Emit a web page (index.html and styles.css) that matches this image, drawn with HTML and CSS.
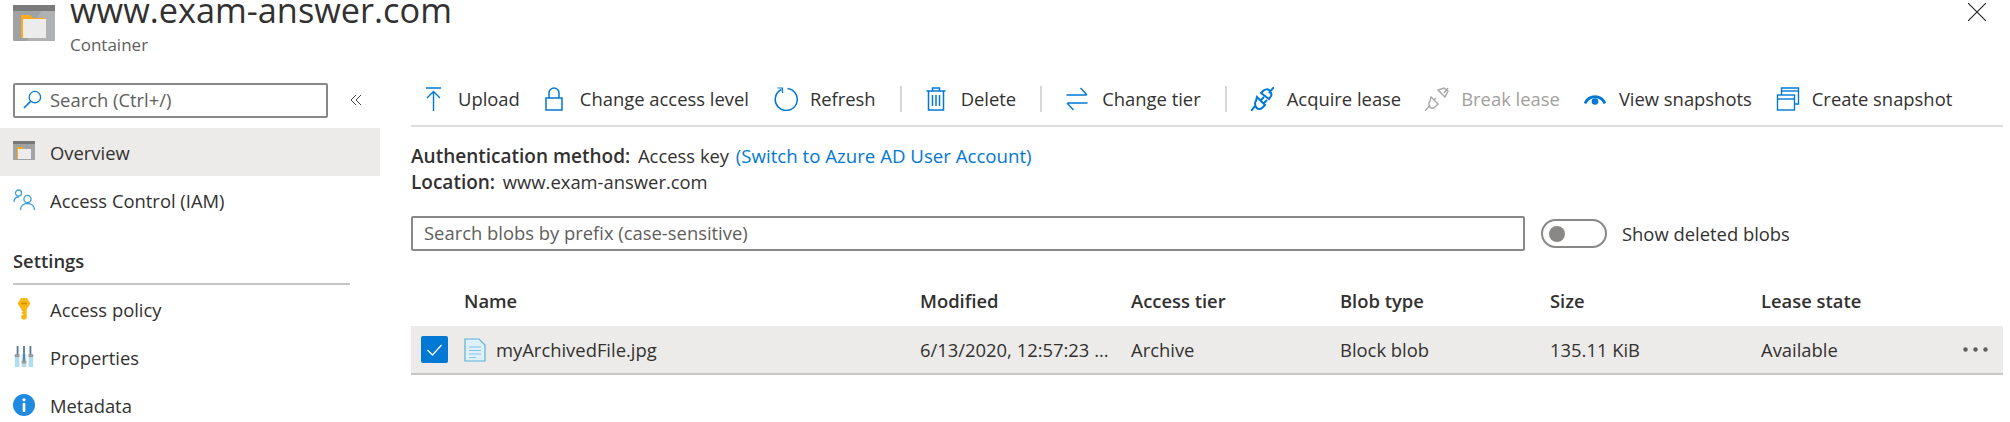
FILE: index.html
```html
<!DOCTYPE html>
<html lang="en">
<head>
    <meta charset="UTF-8">
    <title>www.exam-answer.com</title>
    <link rel="stylesheet" href="styles.css">
</head>
<body>

<header class="header">
    <svg class="header-icon" viewBox="0 0 42 36">
        <rect width="42" height="36" rx="1" fill="#a0a1a2"/>
        <path d="M28 6h14v30H14z" fill="#b0b1b2"/>
        <rect width="42" height="6" fill="#7a7a7a"/>
        <path d="M8 10h9l3 3h13v20H8z" fill="#ffa91f"/>
        <rect x="10" y="14" width="23" height="19" fill="#ececec"/>
    </svg>
    <div>
        <h1 class="title">www.exam-answer.com</h1>
        <div class="subtitle">Container</div>
    </div>
    <svg class="close" viewBox="0 0 16 16"><path d="M0 0l16 16M16 0L0 16" stroke="#222" stroke-width="1"/></svg>
</header>

<div class="page">
    <nav class="side">
        <div class="side-search-row">
            <div class="side-search">
                <svg class="icon-sm" viewBox="0 0 20 20"><circle cx="12.500" cy="7.500" r="6" fill="none" stroke="#0078d4" stroke-width="1.300"/><path d="M8 12l-7 7" stroke="#0078d4" stroke-width="1.600"/></svg>
                <span>Search (Ctrl+/)</span>
            </div>
            <svg class="collapse" viewBox="0 0 12 12"><path d="M6 1L1 6l5 5M11 1L6 6l5 5" fill="none" stroke="#444" stroke-width="1"/></svg>
        </div>
        <a class="side-item active">
            <svg class="side-icon" viewBox="0 0 22 22"><rect y="0" width="22" height="19" fill="#a0a1a2"/><rect width="22" height="3" fill="#777"/><path d="M4 6h5l2 2h7v10H4z" fill="#ffa91f"/><rect x="5" y="8" width="13" height="10" fill="#ececec"/></svg>
            Overview
        </a>
        <a class="side-item">
            <svg class="side-icon" viewBox="0 0 22 22"><g fill="none" stroke="#3b9dd6" stroke-width="1.300"><circle cx="5.500" cy="4" r="3"/><path d="M1 13c0-3 2-5 5-5"/><circle cx="14.500" cy="10" r="3.600"/><path d="M7.500 21c0-4 3-6.500 7-6.500s7 2.500 7 6.500"/></g></svg>
            Access Control (IAM)
        </a>
        <div class="side-group">Settings</div>
        <a class="side-item">
            <svg class="side-icon" viewBox="0 0 22 24"><path d="M8 0h6l4 6-4 6v10l-3 2-3-2v-3l2-1-2-2 2-1-2-2v-1L4 6z" fill="#fcb714"/><rect x="8" y="5" width="6" height="2" fill="#d98c00"/></svg>
            Access policy
        </a>
        <a class="side-item">
            <svg class="side-icon" viewBox="0 0 22 24"><g fill="#b3dcef"><rect x="1" y="9" width="5" height="14"/><rect x="8.500" y="9" width="5" height="14"/><rect x="16" y="9" width="5" height="14"/></g><g fill="#5a7d93"><rect x="3" y="0" width="2" height="12"/><rect x="10" y="0" width="2" height="17"/><rect x="17" y="0" width="2" height="12"/></g><g fill="#999"><rect x="1" y="9" width="5" height="3"/><rect x="8.500" y="16" width="5" height="3"/><rect x="16" y="9" width="5" height="3"/></g></svg>
            Properties
        </a>
        <a class="side-item">
            <svg class="side-icon" viewBox="0 0 22 22"><circle cx="11" cy="11" r="11" fill="#1f8ae0"/><rect x="9.700" y="9" width="2.600" height="9" fill="#fff"/><circle cx="11" cy="5.800" r="1.600" fill="#fff"/></svg>
            Metadata
        </a>
    </nav>

    <main class="main">
        <div class="toolbar">
            <span class="tool">
                <svg class="t-icon i-upload" viewBox="0 0 15 24"><path d="M0 1h15M7.500 24V5M1 11l6.500-6.500L14 11" fill="none" stroke="#0078d4" stroke-width="1.400"/></svg>
                Upload
            </span>
            <span class="tool">
                <svg class="t-icon i-lock" viewBox="0 0 18 24"><path d="M1 11h16v12H1zM4 11V6a5 5 0 0 1 10 0v5" fill="none" stroke="#0078d4" stroke-width="1.500"/></svg>
                Change access level
            </span>
            <span class="tool">
                <svg class="t-icon i-refresh" viewBox="0 0 24 24"><path d="M8 2.500a11 11 0 1 0 6-1" fill="none" stroke="#0078d4" stroke-width="1.500"/><path d="M4 1h5v5" fill="none" stroke="#0078d4" stroke-width="1.200"/></svg>
                Refresh
            </span>
            <span class="sep"></span>
            <span class="tool">
                <svg class="t-icon i-trash" viewBox="0 0 19 24"><path d="M0 4h19M6 4V1h7v3M2 4v19h15V4M6 8v11M9.500 8v11M13 8v11" fill="none" stroke="#0078d4" stroke-width="1.500"/></svg>
                Delete
            </span>
            <span class="sep"></span>
            <span class="tool">
                <svg class="t-icon i-tier" viewBox="0 0 21 24"><path d="M0 8h20M14 1l6.500 7M21 16H1M7 23l-6.500-7" fill="none" stroke="#0078d4" stroke-width="1.400"/></svg>
                Change tier
            </span>
            <span class="sep"></span>
            <span class="tool">
                <svg class="t-icon i-acquire" viewBox="0 0 23 24"><g fill="none" stroke="#0078d4" stroke-width="2"><path d="M0 24l5-6M18 6l5-6M6 10l8 8-3 3c-2 2-5 1-6-1s-2-4 0-6zM10 6l2-2c2-2 5-2 6-1s3 4 2 6l-2 3zM10 13l3-3M13 16l3-3"/></g></svg>
                Acquire lease
            </span>
            <span class="tool tool-off">
                <svg class="t-icon i-break" viewBox="0 0 24 24"><g fill="none" stroke="#a6a6a6" stroke-width="1.400"><path d="M0 24l5-6M19 6l4-5M6 10l7 7-3 3c-2 2-4 1-5 0s-2-4 0-6zM13 3l7 7 3-6-4-3zM9 13l2-2"/></g></svg>
                Break lease
            </span>
            <span class="tool">
                <svg class="t-icon i-eye" viewBox="0 0 22 14"><path d="M1 11.500C5 2.500 17 2.500 21 11.500" fill="none" stroke="#0078d4" stroke-width="2.800"/><circle cx="11" cy="9.500" r="3.300" fill="#0078d4"/></svg>
                View snapshots
            </span>
            <span class="tool">
                <svg class="t-icon i-create" viewBox="0 0 23 24"><g fill="none" stroke="#0078d4" stroke-width="1.400"><path d="M5 8V1h17v16h-4"/><path d="M5 4h17"/><rect x="1" y="8" width="17" height="15"/><path d="M1 12h17"/></g></svg>
                Create snapshot
            </span>
        </div>

        <div class="info">
            <div><b>Authentication method:</b> Access key <a class="link">(Switch to Azure AD User Account)</a></div>
            <div><b>Location:</b> www.exam-answer.com</div>
        </div>

        <div class="filter">
            <div class="filter-input">Search blobs by prefix (case-sensitive)</div>
            <span class="toggle"><i></i></span>
            <span>Show deleted blobs</span>
        </div>

        <div class="grid grid-head">
            <span></span>
            <span>Name</span>
            <span>Modified</span>
            <span>Access tier</span>
            <span>Blob type</span>
            <span>Size</span>
            <span>Lease state</span>
            <span></span>
        </div>
        <div class="grid grid-row">
            <span class="check">
                <svg viewBox="0 0 27 27"><path d="M6.500 14l5 5 9-10" fill="none" stroke="#fff" stroke-width="1.300"/></svg>
            </span>
            <span class="file">
                <svg class="file-icon" viewBox="0 0 22 24"><path d="M1 1h14l6 6v16H1z" fill="#dff0f9" stroke="#59b4d9" stroke-width="1.200"/><path d="M5 9h12M5 12.500h12M5 16h12M5 19.500h7" stroke="#7fc6e6" stroke-width="1.200"/></svg>
                myArchivedFile.jpg
            </span>
            <span>6/13/2020, 12:57:23 ...</span>
            <span>Archive</span>
            <span>Block blob</span>
            <span>135.11 KiB</span>
            <span>Available</span>
            <svg class="more" viewBox="0 0 25 5"><circle cx="2.500" cy="2.500" r="2.200" fill="#605e5c"/><circle cx="12.500" cy="2.500" r="2.200" fill="#605e5c"/><circle cx="22.500" cy="2.500" r="2.200" fill="#605e5c"/></svg>
        </div>
    </main>
</div>

</body>
</html>
```

FILE: styles.css
```css
* {
    box-sizing: border-box;
}
html, body {
    height: 422px;
    overflow: hidden;
}
body {
    margin: 0;
    background: #fff;
    color: #323130;
    font-family: "Open Sans", "Noto Sans", sans-serif;
    font-size: 18.4px;
}
svg {
    display: block;
    flex: none;
}
b {
    font-weight: 600;
    font-size: 19px;
    margin-right: 3px;
}

.header {
    display: flex;
    height: 70px;
    margin-top: -13px;
    padding-left: 13px;
    gap: 15px;
}
.header-icon {
    width: 42px;
    height: 36px;
    margin-top: 18px;
}
.title {
    margin: 0;
    font-size: 34.3px;
    line-height: 46px;
    font-weight: 400;
}
.subtitle {
    font-size: 17px;
    line-height: 24px;
    color: #605e5c;
}
.close {
    width: 18px;
    height: 18px;
    margin: 16px 24px 0 auto;
}

.page {
    display: flex;
    padding-top: 26px;
}
.side {
    width: 380px;
    flex: none;
}
.side-search-row {
    display: flex;
    align-items: center;
    padding-left: 13px;
    gap: 22px;
    height: 34px;
    margin-bottom: 11px;
}
.side-search {
    width: 315px;
    height: 35px;
    display: flex;
    align-items: center;
    gap: 8px;
    padding: 0 0 2px 8px;
    border: 2px solid #8a8886;
    border-radius: 2px;
    color: #605e5c;
}
.icon-sm {
    width: 19px;
    height: 19px;
}
.collapse {
    width: 12px;
    height: 12px;
}
.side-item {
    display: flex;
    align-items: center;
    height: 48px;
    padding-left: 13px;
    gap: 15px;
}
.side-item.active {
    background: #edebe9;
}
.side-icon {
    width: 22px;
    height: 22px;
}
.side-group {
    margin: 19px 30px 0 13px;
    height: 42px;
    line-height: 35px;
    border-bottom: 2px solid #c8c6c4;
    font-weight: 600;
}

.main {
    width: 1592px;
    margin-left: 31px;
    margin-top: -5px;
    flex: none;
}
.toolbar {
    display: flex;
    align-items: center;
    height: 49px;
    padding: 0 0 6px 15px;
    border-bottom: 2px solid #e1dfdd;
    gap: 24px;
}
.tool {
    display: flex;
    align-items: center;
    white-space: nowrap;
}
.tool-off {
    color: #a19f9d;
}
.t-icon {
    height: 24px;
}
.i-upload { width: 15px; margin-right: 17px; }
.i-lock { width: 18px; margin-left: 1px; margin-right: 17px; }
.i-refresh { width: 25px; margin-right: 12px; }
.i-trash { width: 20px; margin-right: 15px; }
.i-tier { width: 22px; margin-right: 14px; }
.i-acquire { width: 23px; margin-right: 13px; }
.i-break { width: 24px; margin-right: 12px; }
.i-eye { width: 22px; margin-right: 13px; }
.i-create { width: 24px; margin-right: 12px; }
.sep {
    width: 2px;
    height: 26px;
    background: #d6d6d6;
}

.info {
    padding-top: 16px;
    line-height: 26px;
}
.link {
    color: #0078d4;
    font-size: 18.65px;
    margin-left: 2px;
}

.filter {
    display: flex;
    align-items: center;
    margin-top: 21px;
    height: 35px;
}
.filter-input {
    width: 1114px;
    height: 35px;
    line-height: 29px;
    padding-left: 11px;
    border: 2px solid #8a8886;
    border-radius: 2px;
    color: #605e5c;
}
.toggle {
    display: flex;
    align-items: center;
    width: 66px;
    height: 29px;
    margin: 0 15px 0 16px;
    padding-left: 6px;
    border: 2px solid #8a8886;
    border-radius: 15px;
}
.toggle i {
    width: 16px;
    height: 16px;
    border-radius: 50%;
    background: #8a8886;
}

.grid {
    display: grid;
    grid-template-columns: 53px 456px 211px 209px 210px 211px 202px 40px;
    align-items: center;
}
.grid-head {
    margin-top: 26px;
    height: 49px;
    padding-bottom: 2px;
    font-weight: 600;
}
.grid-row {
    background: #edebe9;
    border-bottom: 2px solid #c8c6c4;
    height: 49px;
}
.check {
    width: 27px;
    height: 27px;
    margin-left: 10px;
    border-radius: 2px;
    background: #0078d4;
}
.file {
    display: flex;
    align-items: center;
    gap: 10px;
}
.file-icon {
    width: 22px;
    height: 24px;
}
.more {
    width: 25px;
    height: 5px;
}
```
